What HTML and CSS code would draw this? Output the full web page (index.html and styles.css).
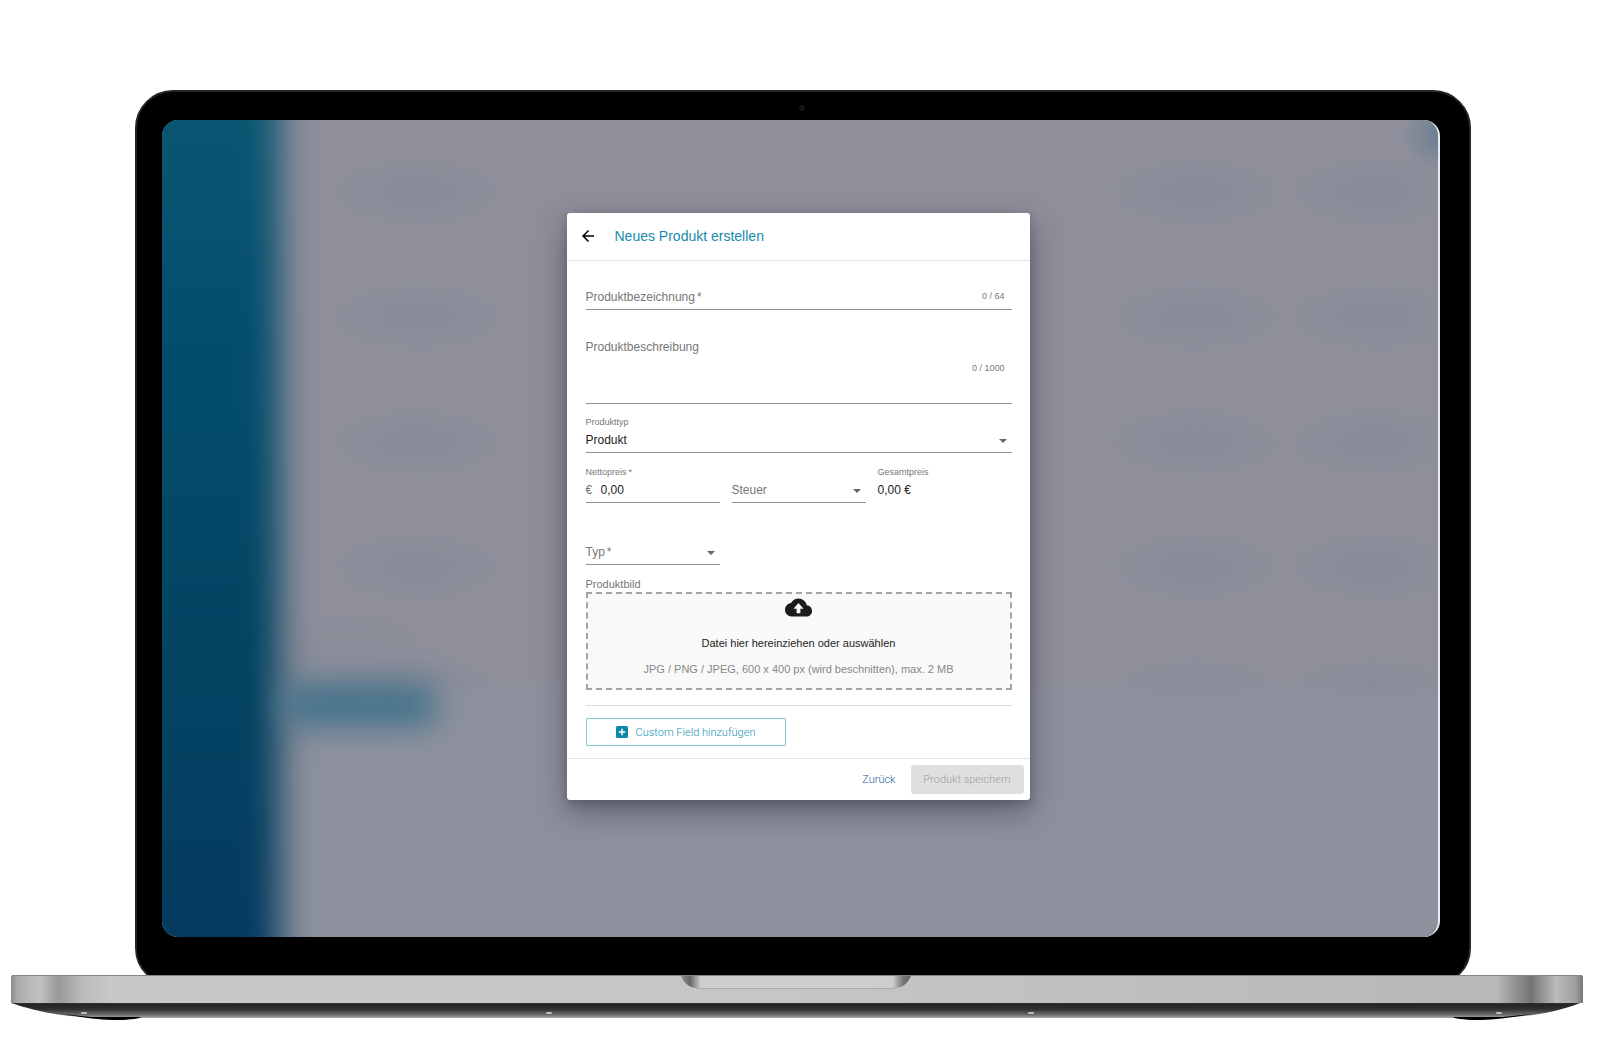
FILE: index.html
```html
<!DOCTYPE html>
<html lang="de">
<head>
<meta charset="utf-8">
<meta name="viewport" content="width=device-width, initial-scale=1">
<title>Neues Produkt erstellen</title>
<link rel="stylesheet" href="styles.css">
</head>
<body>
<main class="laptop">
  <div class="lid">
    <span class="camera"></span>
    <div class="screen">
      <form class="dialog">
        <header class="dialog-header">
          <button class="back" type="button" aria-label="Zurück zur Übersicht">
            <svg viewBox="0 0 24 24" width="18" height="18"><path d="M20 11H7.830l5.590-5.590L12 4l-8 8 8 8 1.410-1.410L7.830 13H20z"/></svg>
          </button>
          <h1 class="title">Neues Produkt erstellen</h1>
        </header>

        <div class="dialog-body">
          <div class="control">
            <input class="input" id="name" type="text" maxlength="64" required>
            <label class="placeholder" for="name">Produktbezeichnung<span class="star">*</span></label>
            <span class="counter">0 / 64</span>
          </div>

          <div class="control description">
            <textarea class="input" id="description" maxlength="1000"></textarea>
            <label class="placeholder" for="description">Produktbeschreibung</label>
            <span class="counter">0 / 1000</span>
          </div>

          <div class="field">
            <label class="label" for="kind">Produkttyp</label>
            <div class="control">
              <select class="input" id="kind"><option>Produkt</option><option>Dienstleistung</option></select>
              <svg class="caret" viewBox="0 0 8 4" width="8" height="4"><path d="M0 0h8L4 4z"/></svg>
            </div>
          </div>

          <div class="columns prices">
            <div class="field">
              <label class="label" for="net">Nettopreis<span class="star">*</span></label>
              <div class="control">
                <input class="input amount" id="net" type="text" value="0,00">
                <span class="currency">€</span>
              </div>
            </div>
            <div class="field tax">
              <div class="control">
                <select class="input" id="tax"><option></option><option>19 %</option><option>7 %</option></select>
                <label class="placeholder" for="tax">Steuer</label>
                <svg class="caret" viewBox="0 0 8 4" width="8" height="4"><path d="M0 0h8L4 4z"/></svg>
              </div>
            </div>
            <div class="field">
              <span class="label">Gesamtpreis</span>
              <output class="total" for="net tax">0,00 €</output>
            </div>
          </div>

          <div class="columns unit">
            <div class="control">
              <select class="input" id="unit"><option></option><option>Stück</option></select>
              <label class="placeholder" for="unit">Typ<span class="star">*</span></label>
              <svg class="caret" viewBox="0 0 8 4" width="8" height="4"><path d="M0 0h8L4 4z"/></svg>
            </div>
          </div>

          <div class="image-label">Produktbild</div>
          <button class="dropzone" type="button">
            <svg class="cloud" viewBox="0 0 24 24" width="27" height="27"><path d="M19.350 10.040C18.670 6.590 15.640 4 12 4 9.110 4 6.600 5.640 5.350 8.040 2.340 8.360 0 10.910 0 14c0 3.310 2.690 6 6 6h13c2.760 0 5-2.240 5-5 0-2.640-2.050-4.780-4.650-4.960zM13.700 13v4h-3.400v-4H7.500L12 8l4.500 5z"/></svg>
            <span class="drop-title">Datei hier hereinziehen oder auswählen</span>
            <span class="drop-hint">JPG / PNG / JPEG, 600 x 400 px (wird beschnitten), max. 2 MB</span>
          </button>

          <hr class="rule">

          <button class="custom" type="button">
            <svg viewBox="0 0 12 12" width="12" height="12"><rect width="12" height="12" rx="1.500" fill="#0e87a8"/><path d="M6 2.700v6.600M2.700 6h6.600" stroke="#fff" stroke-width="1.500"/></svg>
            Custom Field hinzufügen
          </button>
        </div>

        <footer class="dialog-footer">
          <button class="link" type="button">Zurück</button>
          <button class="save" type="submit" disabled>Produkt speichern</button>
        </footer>
      </form>
    </div>
  </div>

  <svg class="base" viewBox="0 0 1572 46" aria-hidden="true">
    <defs>
      <linearGradient id="metal">
        <stop offset="0" stop-color="#8a8a8a"/><stop offset=".004" stop-color="#aaa"/><stop offset=".018" stop-color="#c2c2c2"/>
        <stop offset=".030" stop-color="#999"/><stop offset=".046" stop-color="#bcbcbc"/><stop offset=".065" stop-color="#c8c8c8"/>
        <stop offset=".500" stop-color="#c6c6c6"/><stop offset=".800" stop-color="#bcbcbc"/><stop offset=".945" stop-color="#b8b8b8"/>
        <stop offset=".967" stop-color="#747474"/><stop offset=".983" stop-color="#bbb"/><stop offset=".995" stop-color="#a0a0a0"/><stop offset="1" stop-color="#777"/>
      </linearGradient>
      <linearGradient id="under" x2="0" y2="1">
        <stop offset="0" stop-color="#555"/><stop offset=".120" stop-color="#242424"/><stop offset=".450" stop-color="#303030"/><stop offset=".800" stop-color="#6c6c6c"/><stop offset="1" stop-color="#aaa"/>
      </linearGradient>
      <linearGradient id="notch">
        <stop offset="0" stop-color="#909090"/><stop offset=".040" stop-color="#666"/><stop offset=".085" stop-color="#cecece"/>
        <stop offset=".920" stop-color="#cecece"/><stop offset=".965" stop-color="#777"/><stop offset="1" stop-color="#666"/>
      </linearGradient>
    </defs>
    <path d="M0 27h1572c-12 5-30 10-50 13-16 2-30 3-60 3H110c-30 0-44-1-60-3C30 37 12 32 0 28z" fill="url(#under)"/>
    <path d="M51 39C75 43 90 45 106 45c14 0 24-2 24-3H80zM1521 39c-24 4-40 6-55 6-14 0-24-2-24-3h50z"/>
    <path d="M2 0h1568q2 0 2 2v26H0V2q0-2 2-2z" fill="url(#metal)"/>
    <path d="M1 .500h1570" stroke="#888"/>
    <path d="M670 1h230c-3 7-8 12-18 12.500H688C678 13 673 8 670 1z" fill="url(#notch)"/>
    <path d="M686 13.500h198" stroke="#aaa"/>
    <g fill="#bbb"><rect x="70" y="37" width="6" height="2" rx="1"/><rect x="535" y="37" width="6" height="2" rx="1"/><rect x="1017" y="37" width="6" height="2" rx="1"/><rect x="1485" y="37" width="6" height="2" rx="1"/></g>
  </svg>
</main>
</body>
</html>
```
FILE: styles.css
```css
* {
  box-sizing: border-box;
}

body {
  margin: 0;
  background: #fff;
  color: #222;
  font-family: "Liberation Sans", Arial, sans-serif;
  font-size: 12px;
}

button,
input,
select,
textarea {
  font: inherit;
  color: inherit;
}

/* Laptop */
.laptop {
  padding: 90px 17px 34px 11px;
}

.lid {
  position: relative;
  margin: 0 112px 0 124px;
  padding: 28px 29px 47px 25px;
  border: 2px solid #222627;
  border-radius: 38px;
  background: #000;
}

.camera {
  position: absolute;
  top: 13px;
  left: calc(50% - 4px);
  width: 6px;
  height: 6px;
  border-radius: 50%;
  background: #11131c;
}

.base {
  position: relative;
  display: block;
  width: 100%;
  margin-top: -11px;
}

.screen {
  position: relative;
  display: flex;
  justify-content: center;
  padding: 93px 4px 137px 0;
  border-right: 2px solid #e8eaee;
  border-radius: 16px;
  overflow: hidden;
  background:
    radial-gradient(circle at 100% 16px, #6b7f92 0, transparent 36px) no-repeat,
    linear-gradient(transparent 560px, #8d919d 580px) no-repeat,
    radial-gradient(90px 36px at 20% 72px, #888a97 0, transparent 100%) 0 0 / 100% 125px,
    radial-gradient(90px 36px at 81% 72px, #888a97 0, transparent 100%) 0 0 / 100% 125px,
    radial-gradient(90px 36px at 95% 72px, #888a97 0, transparent 100%) 0 0 / 100% 125px,
    #8e8f9b;
}

/* Navigation bar behind the dialog, out of focus */
.screen::before {
  content: "";
  position: absolute;
  inset: -40px auto -40px -60px;
  width: 178px;
  background: linear-gradient(#0c5873, #034e6d 28%, #034563 62%, #05395f);
  filter: blur(17px);
}

.screen::after {
  content: "";
  position: absolute;
  top: 564px;
  left: 120px;
  width: 154px;
  height: 42px;
  border-radius: 12px;
  background: #41718a;
  box-shadow: -28px -46px 20px -18px #5f748866;
  filter: blur(16px);
}

/* Dialog */
.dialog {
  position: relative;
  z-index: 1;
  width: 463px;
  max-width: 100%;
  border-radius: 3px;
  background: #fff;
  box-shadow: 0 12px 32px rgba(40, 40, 50, .45), 0 4px 8px rgba(40, 40, 50, .25);
}

.dialog-header {
  display: flex;
  align-items: center;
  gap: 18px;
  height: 48px;
  padding: 0 12px 2px;
  border-bottom: 1px solid #e2e4e8;
}

.back {
  display: flex;
  padding: 0;
  border: 0;
  background: none;
}

.title {
  margin: 0;
  color: #158bab;
  font-size: 14px;
  font-weight: 400;
}

.dialog-body {
  padding: 24px 18px 12px 19px;
}

.control {
  display: grid;
}

.control > * {
  grid-area: 1 / 1;
}

.input {
  width: 100%;
  height: 25px;
  margin: 0;
  padding: 0;
  border: 0;
  border-bottom: 1px solid #929292;
  border-radius: 0;
  outline: 0;
  background: none;
  appearance: none;
  resize: none;
}

.placeholder {
  justify-self: start;
  color: #777;
  line-height: 24px;
  pointer-events: none;
}

.star {
  margin-left: 2px;
}

.label {
  display: block;
  color: #777;
  font-size: 9px;
  line-height: 12px;
}

.counter {
  align-self: center;
  justify-self: end;
  padding: 0 7px 3px 0;
  color: #777;
  font-size: 9px;
}

.description {
  margin: 25px 0 12px;
}

.description .input {
  height: 69px;
}

.caret {
  align-self: center;
  justify-self: end;
  margin-right: 5px;
  fill: #666;
  pointer-events: none;
}

.columns {
  display: grid;
  grid-template-columns: repeat(3, 1fr);
  gap: 12px;
}

.prices {
  margin-top: 13px;
}

.tax {
  align-self: end;
}

.amount {
  padding-left: 15px;
}

.currency {
  justify-self: start;
  color: #777;
  line-height: 24px;
}

.total {
  display: block;
  line-height: 24px;
}

.unit {
  margin: 37px 0 12px;
}

.image-label {
  color: #777;
  font-size: 11px;
  line-height: 15px;
}

.dropzone {
  display: flex;
  flex-direction: column;
  align-items: center;
  width: 100%;
  height: 98px;
  padding: 0;
  border: 2px dashed #a4a4a4;
  background: #f9f9f9;
  font-size: 11px;
}

.cloud {
  fill: #1c1c1c;
}

.drop-title {
  margin-top: 15px;
  line-height: 14px;
}

.drop-hint {
  margin-top: 12px;
  color: #888;
  line-height: 14px;
}

.rule {
  margin: 15px 0 12px;
  border: 0;
  border-top: 1px solid #d8d8d8;
}

.custom,
.link,
.save {
  padding: 0;
  font-family: Roboto, "Liberation Sans", sans-serif;
  font-size: 11px;
  font-weight: 300;
}

.custom {
  display: flex;
  align-items: center;
  justify-content: center;
  gap: 8px;
  width: 200px;
  height: 28px;
  border: 1px solid #8ac6d8;
  border-radius: 1px;
  background: #fff;
  color: #1694b3;
}

.dialog-footer {
  display: flex;
  align-items: center;
  justify-content: flex-end;
  gap: 15px;
  padding: 6px;
  border-top: 1px solid #e0e2e5;
}

.link {
  border: 0;
  background: none;
  color: #1c6496;
}

.save {
  width: 113px;
  height: 29px;
  border: 0;
  border-radius: 3px;
  background: #dfdfdf;
  color: #a0a0a0;
}
```
